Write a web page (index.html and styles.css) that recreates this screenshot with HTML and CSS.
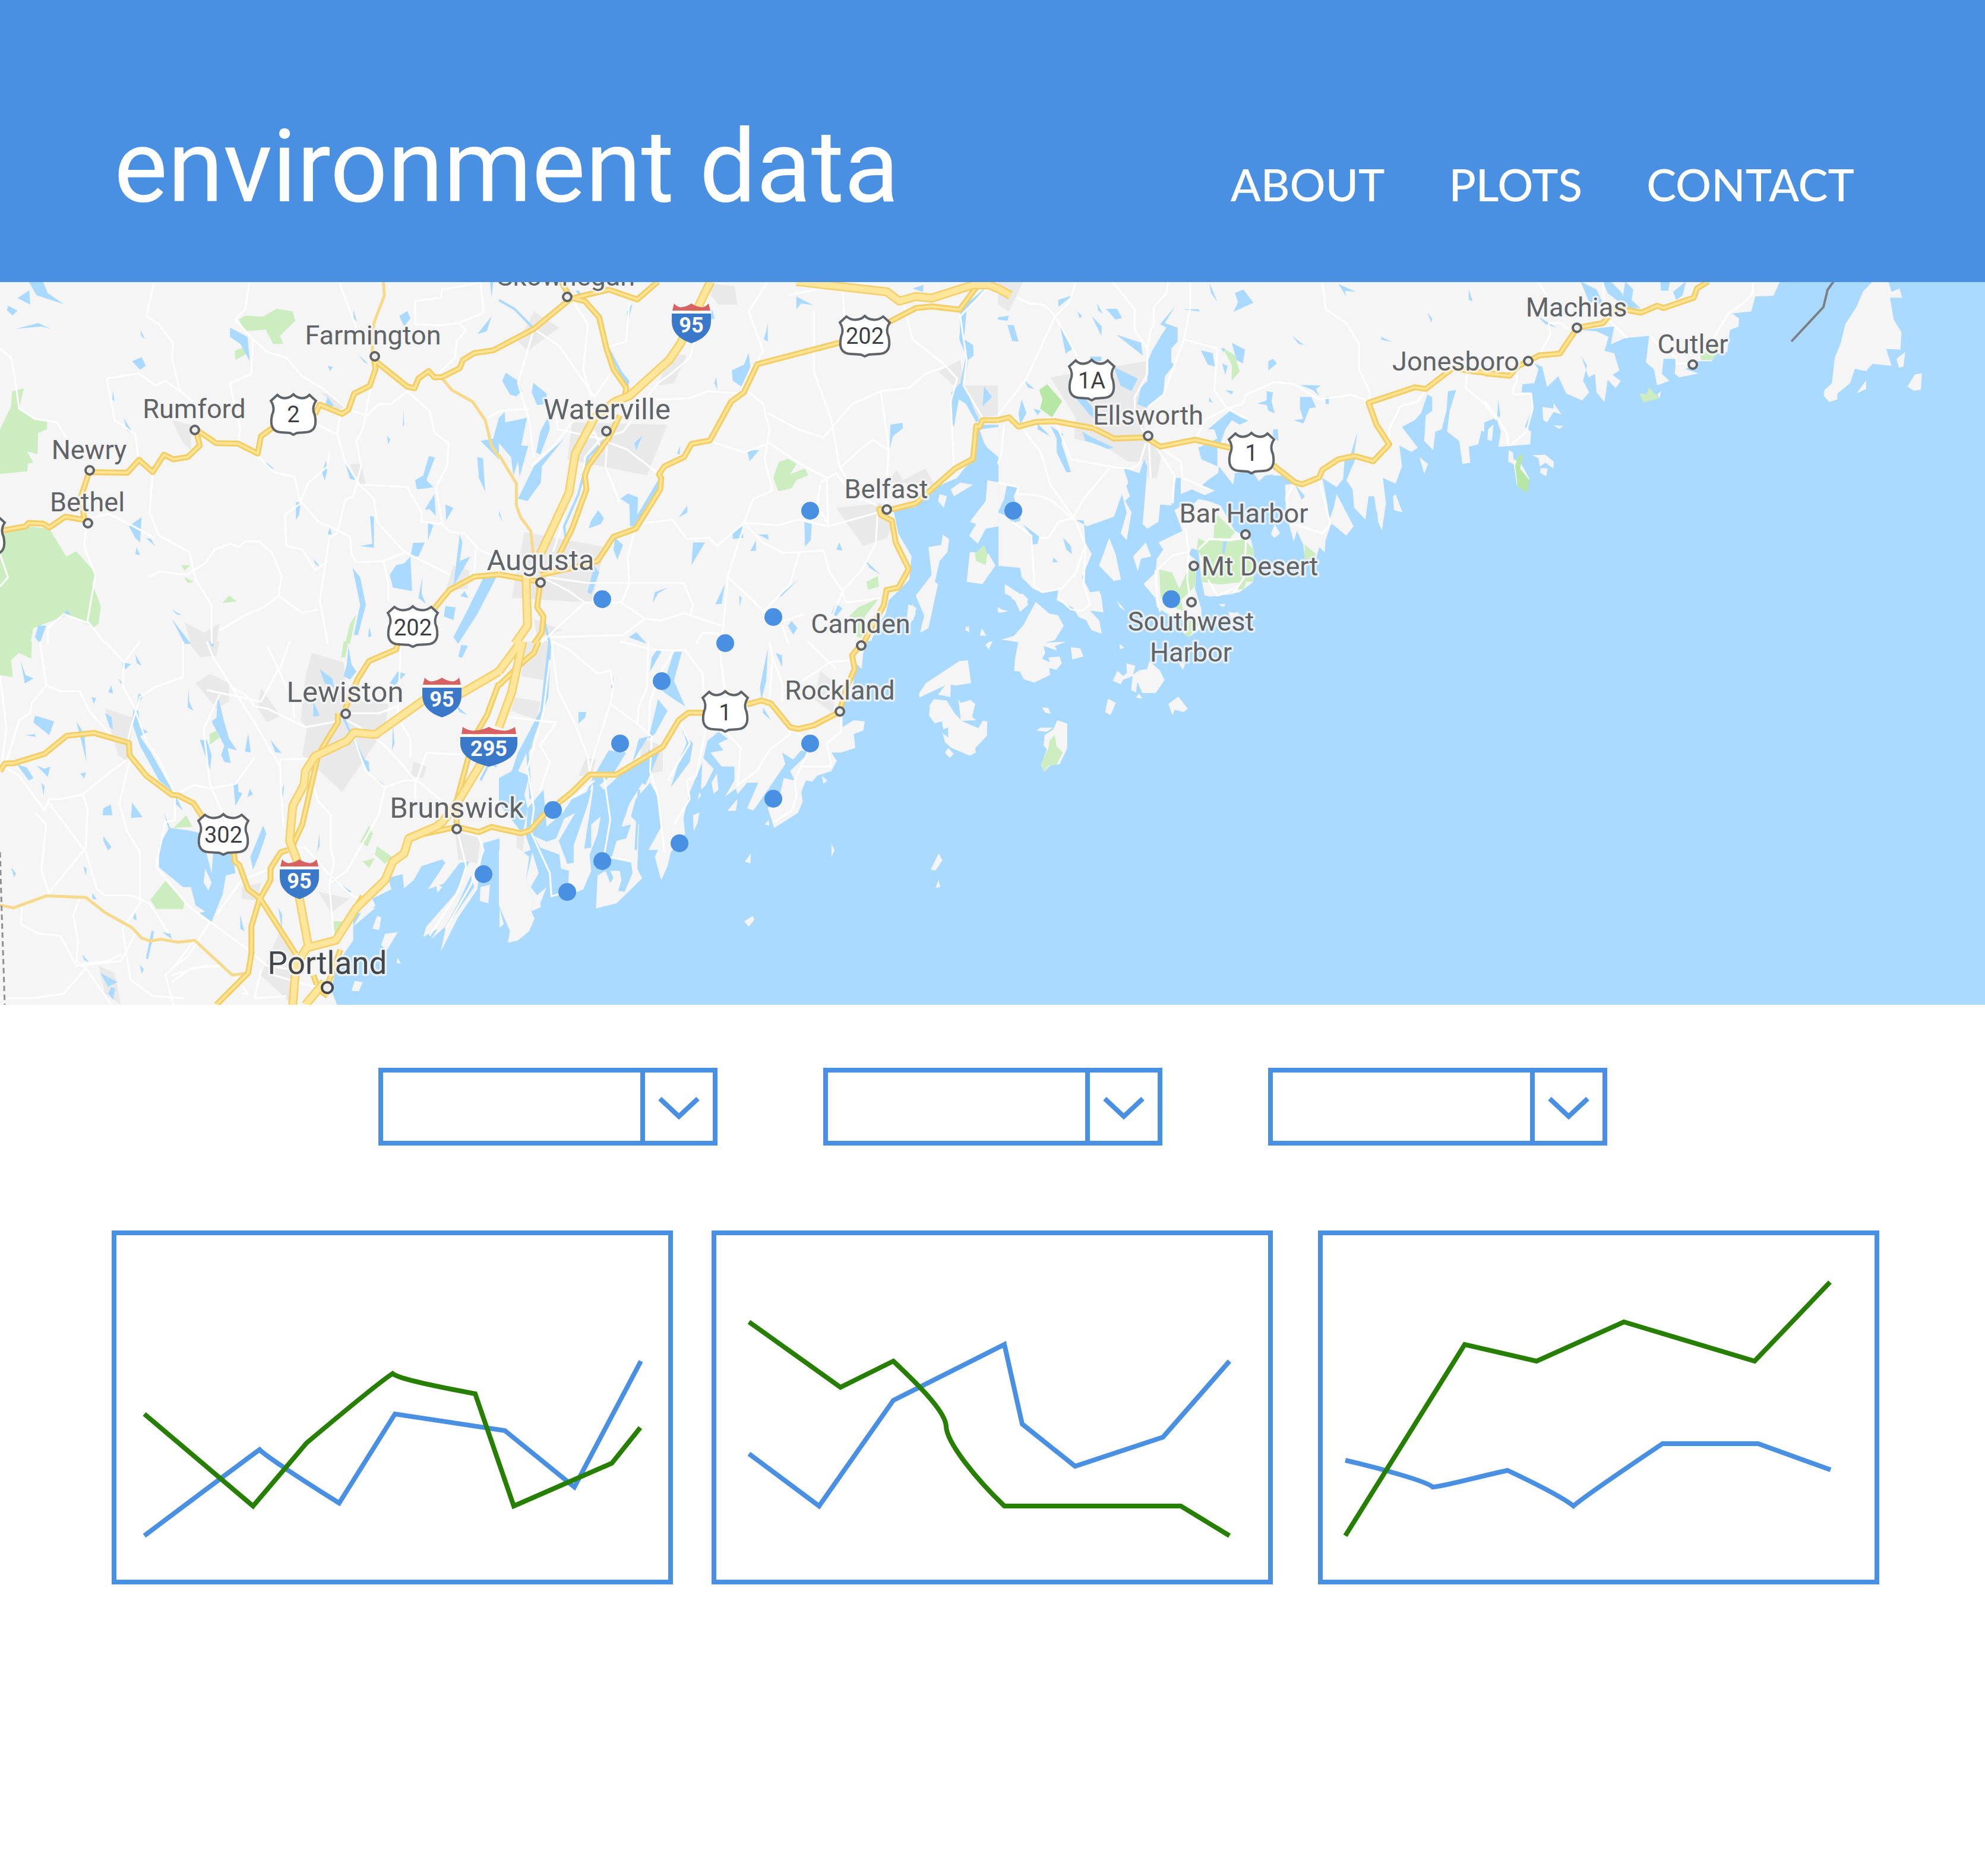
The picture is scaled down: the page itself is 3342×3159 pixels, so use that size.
FILE: index.html
```html
<!DOCTYPE html>
<html lang="en">
<head>
<meta charset="utf-8">
<meta name="viewport" content="width=device-width, initial-scale=1">
<title>environment data</title>
<link rel="stylesheet" href="styles.css">
</head>
<body>
<header class="site-header">
  <h1 class="site-title">environment data</h1>
  <nav class="site-nav" aria-label="Main">
    <a href="#about">ABOUT</a>
    <a href="#plots">PLOTS</a>
    <a href="#contact">CONTACT</a>
  </nav>
</header>

<main>
<svg class="map" viewBox="0 475 3342 1217" role="img" aria-label="Map of the Maine coast with monitoring stations">
  <defs>
    <g id="us-shield">
      <path d="M-27-32Q-20-25-11-27-5-28 0-33 5-28 11-27 20-25 27-32L38-22Q30-10 36 2 42 30 20 31L6 32 0 35-6 32-20 31Q-42 30-36 2-30-10-38-22Z"/>
    </g>
    <g id="us-shield-wide">
      <path d="M-31-32Q-22-25-12-27-5-28 0-33 5-28 12-27 22-25 31-32L42-22Q34-10 40 2 46 30 24 31L7 32 0 35-7 32-24 31Q-46 30-40 2-34-10-42-22Z"/>
    </g>
    <g id="minor">
      <g transform="translate(0 474) scale(.5357 .389)">
        <path d="M485 0 460 150 500 185 545 270 540 330 565 470 605 520M785 0 770 120 740 165 795 250 790 400 722 440 755 640 748 700M795 250 840 305 900 330 950 410 1010 460 1095 555 1155 580 1190 530 1230 530 1280 475M0 290 35 330 45 400 60 550 110 595 180 610 250 780M335 420 435 398 490 450 520 430 600 510M335 420 360 600 425 660 435 770M480 830 470 1000 500 1100 595 1170 615 1290 665 1400 665 1568M270 1060 265 1150 300 1270 275 1470 330 1568M270 1030 340 1005 420 1060 485 1110M470 1280 500 1255 585 1270 645 1220 675 1160 725 1135 750 1150 770 1125 815 1125 855 1175 885 1275 875 1360 830 1410 770 1445 690 1510M750 710 820 770 860 825 925 845 945 960 895 1010 900 1145 950 1160 990 1250 1030 1210M1070 570 1060 660 1085 780 1130 880 1175 940 1185 1040 1270 1170 1415 1270M1000 620 1055 660M1165 460 1140 640 1120 690 1135 800 1110 930 1085 945 1060 1090 1035 1110 1005 1380 1030 1568M1035 740 1030 800 970 870 945 950 1000 1040 1035 1060 1100 1105 1105 1180 1120 1215 1205 1210 1270 1175M1280 475 1350 560 1365 655 1410 700 1405 800 1370 890 1390 1050 1415 1085 1460 1090 1505 1160 1568 1200M1140 880 1280 890 1325 1000 1325 1040 1390 1050M1205 1210 1220 1300 1220 1380M1065 0 1120 200M1510 0 1520 135 1440 180 1380 190 1305 185 1305 85 1385 70 1390 35 1510 5M1440 180 1465 210 1435 260 1430 330 1370 410M1525 595 1568 565M0 1180 25 1280 0 1320M150 1568 150 1500 200 1440 280 1480M875 1360 950 1435 1000 1420M1495 1160 1490 1280"/>
      </g>
      <g transform="translate(840 474) scale(.5357 .389)">
        <path d="M230 80 280 185 265 380 290 500M110 205 60 440 95 600 110 760M110 205 190 280 300 500 350 400M340 285 400 260 410 90M430 505 530 510 600 505 655 475 760 485M670 0 600 330 540 400 500 440 430 560M845 0 785 130 830 300 810 350M1080 0 1085 150M910 60 1010 30M990 130 990 390 1045 600 1070 800 1140 950M770 460 830 530 850 640 835 770 860 905 800 940 770 1045 880 1055 940 1030 1035 1060 1190 1000M845 570 940 640 1020 675 1110 530 1200 475 1290 460 1340 400 1400 370M1200 475 1225 720 1215 970M660 690 770 740 850 700 960 800 1030 850 1035 1060M1070 810 1125 740 1175 685 1225 730M1270 90 1300 250 1400 360 1440 420 1420 520 1430 800M1535 30 1450 150 1470 340 1460 450 1520 590M1190 1000 1185 1130 1140 1250 1080 1340 1090 1390 1200 1370M440 1050 545 1030 590 1115 660 1110 685 1145 770 1045 830 1130 895 1175 1020 1165 1040 1260 1080 1340 1050 1440M770 1060 720 1270 700 1568M720 1280 790 1370 870 1480 960 1440M945 1170 915 1310 830 1430M150 1280 280 1305 580 1305 610 1400 600 1450M150 1290 220 1340 270 1390 385 1390 460 1460 510 1468 580 1435 700 1490M385 1390 410 1310 405 1190 430 1060M460 1460 390 1530 160 1540M270 1390 190 1490 130 1568M240 590 180 700 100 800M340 690 335 800 380 960M330 690 400 725 500 830M180 580 185 640 320 680 390 650 430 580M320 680 270 760 265 850M95 550 0 560M620 1568 640 1520 700 1525M890 1490 910 1568M1010 880 1000 970 1040 1060M1010 870 1060 830 1110 920 1190 970M320 720 300 650 230 750 200 1050 170 1170"/>
      </g>
      <g transform="translate(1680 474) scale(.5357 .389)">
        <path d="M60 70 100 95 145 100 180 150 240 300 270 380M245 0 225 90 180 150 90 420 0 580M360 0 430 120 430 210 470 290 470 400 430 500 430 560 460 660M535 0 530 50 490 110 490 190 480 210 470 290M605 0 605 110 585 250 520 490 470 545M585 250 690 290 680 470 720 550 790 600M1020 0 1030 120 1095 180 1135 270 1135 380 1170 480 1165 520M720 550 770 530 780 490 870 435 930 445 1010 510 1110 490 1170 520M180 605 230 770 370 805 420 810 445 790 465 700M80 640 135 740 165 880 240 1025 275 1140 245 1260 200 1330 140 1345 115 1320 110 1200 105 1100 45 1040M350 810 270 940 235 1025 190 1040 160 1110 130 1110M20 620 10 750 0 790M0 870 65 890 60 920 125 925 170 950 235 1025M475 700 480 850M480 690 575 780 580 850 665 900M490 700 555 840 550 960M1345 470 1320 520 1265 540 1230 640 1230 690M1475 390 1470 460 1530 530 1568 600M930 880 905 940 930 1050 1020 1090 1045 1050 1010 860M780 1110 725 1120 665 1115 630 1160M780 1100 775 1280 740 1350M600 1170 595 1290 605 1380M495 1250 500 1360 510 1430M620 690 650 600 720 550M590 1070 600 1170 550 1185 500 1250M660 1290 690 1360 740 1330M275 1140 270 1310 290 1400 265 1425 230 1420 190 1370"/>
      </g>
      <g transform="translate(2500 474) scale(.537 .389)">
        <path d="M165 0 200 70M370 0 375 110M840 0 840 50 810 95 765 135 710 260M200 180 205 230 170 320M200 180 240 180 255 200 290 205M390 170 445 245M100 390 100 430 88 465 90 490 145 485 150 550 130 650 80 710M0 520 40 590 70 660 72 710M520 235 545 280 600 330 600 355 650 355"/>
      </g>
      <g transform="translate(0 1080) scale(.5357 .3903)">
        <path d="M0 150 20 370 5 540M125 0 145 190 100 265 95 310 60 340 20 520M145 190 190 215 250 215 280 300 345 400M15 540 60 580 140 730 155 680 190 680 260 660 340 570 400 510M260 660 275 720 270 890 150 1090M330 0 390 90 385 190 420 280 460 430 500 510 550 660M390 90 440 0M575 0 575 155 490 195 440 240 410 380 400 440M650 0 670 70 730 200 800 350 880 540 890 800M730 200 770 230 800 280 840 290 960 370 1060 345M875 120 920 260 925 330M875 120 820 260 650 210M880 120 910 0M875 120 840 20M690 230 640 380 660 620 700 740M550 660 610 620 660 635 740 615 800 500M550 660 550 770 520 780 490 970 590 1140 660 1210 770 1320M410 500 375 700 400 820 440 910 440 1130M110 740 145 790 130 990 155 1090M150 690 270 910 305 1070 330 1095 410 1095 470 1130 530 1260M70 1130 65 1220 120 1260 190 1270 240 1400 380 1380 430 1250M250 1110 230 1180 245 1290 240 1380 270 1410 350 1568M270 1410 200 1520 100 1540 0 1540M260 1390 340 1380 380 1350M440 1130 385 1240 410 1460 480 1530 580 1540M610 1290 550 1400 520 1440 545 1568M700 1400 600 1410 540 1470M660 1210 590 1360 550 1400M680 1180 760 1030 850 980M770 1320 840 1400 940 1420M980 600 1000 690 1040 750 1040 900 1050 950 1035 1050 1050 1290M900 890 960 890 1000 950 1030 1000 1100 1090 1140 1120M1090 340 1130 370 1210 450 1270 540 1305 600 1320 610 1415 720M1110 410 1150 560 1210 630 1190 750 1090 990 1040 1040M1210 630 1270 600 1310 600 1340 480 1460 490M1090 310 1190 310 1250 280M1260 0 1250 330 1290 420 1290 500M1305 600 1305 680M880 540 880 510 990 505M1440 830 1465 970 1440 1080 1350 1270M1500 830 1520 900 1480 1050 1400 1240M540 1440 640 1400 700 1400M740 1450 780 1520 760 1520M860 1440 960 1480 990 1490M820 1420 800 1540 900 1530"/>
      </g>
      <g transform="translate(840 1080) scale(.5357 .3903)">
        <path d="M165 0 185 210 240 360 280 500 285 570M165 0 220 35 310 140 350 125 360 200 350 270 430 350 480 410 475 560 500 670 520 910M160 80 140 300 90 550 110 720 100 820 160 1000 165 1100 215 1080M0 320 110 340 180 350 130 450 160 520 130 640M350 270 300 480 285 560M470 0 465 200 440 280 435 350M470 410 475 260 510 130 550 40M380 0 480 35 550 40 585 35 640 140 650 380 620 580 590 600 600 680 550 790M690 0 710 210M850 0 860 70 890 180 890 260M700 370 760 460 750 620 810 560 850 470 915 400 910 370M970 0 1060 120M1110 80 1040 90 890 230M860 70 850 250M1075 320 1075 390 1030 440 1045 540 950 540M990 360 970 440M930 380 980 450 950 540 930 600 935 670 920 730 865 780M330 580 350 770 330 930M345 930 415 950M570 350 600 440 530 600M230 650 240 670 300 600"/>
      </g>
    </g>
    <g id="routes">
      <g transform="translate(0 474) scale(.5357 .389)">
        <path d="M0 1080 80 1060 90 1045 135 1048 155 1065 205 1018 265 1032 255 930 280 825 400 828 437 772 480 825 515 750 545 770 590 760 628 710 615 640 680 700 748 702 810 745 820 670 860 630M990 575 1005 533 1075 573 1095 555 1113 485 1162 452 1180 380 1176 340 1280 455 1303 462 1315 420 1347 388 1365 415 1390 413 1445 375 1455 340 1490 310 1550 298 1568 285M1365 1415 1413 1335 1490 1278 1568 1268"/>
      </g>
      <g transform="translate(840 474) scale(.5357 .389)">
        <path d="M0 285 110 205 225 75 345 35 435 78 500 0M195 0 225 70 270 85 315 155 338 290 360 380 400 460 395 510M338 690 280 800 270 840 275 900 230 1070 190 1180M1500 25 1448 122 1360 108 1310 115 1220 180M1070 265 812 358 770 480 730 520 663 688 605 703 582 760 520 800 503 835 510 850 507 900 430 1070 360 1105 310 1210 230 1240 130 1270M340 690 380 580M0 1268 130 1300 120 1410 140 1450 135 1520 110 1568M1568 600 1520 600 1510 630 1500 625 1490 768 1435 808 1310 960 1240 985 1195 985 1200 1010 1235 1035 1247 1130 1288 1245 1255 1325 1218 1335 1210 1400 1170 1500 1145 1568"/>
      </g>
      <g transform="translate(1680 474) scale(.5357 .389)">
        <path d="M0 600 35 588 65 628 120 608 180 605 300 635 365 680 465 675 510 715 620 685 730 720M865 795 935 870 957 878 1010 848 1020 815 1070 770 1120 755 1180 778 1230 705 1190 620 1165 525 1310 458 1345 465 1430 375 1500 390 1568 400"/>
      </g>
      <g transform="translate(2500 474) scale(.537 .389)">
        <path d="M0 398 78 408 100 370 170 320 235 312 290 200 370 180 410 115 490 135 540 105 560 115 655 70 665 30 700 0"/>
      </g>
      <g transform="translate(0 1080) scale(.5357 .3903)">
        <path d="M0 560 15 527 45 525 140 485 210 407 295 395 405 438 407 490 460 580 540 662 560 665 608 698 635 755M735 910 738 950 752 965 780 1070 818 1110 860 1200 930 1350M905 900 882 910 850 980 850 1030 815 1115 790 1230 790 1350 780 1430 680 1568M1250 10 1245 35 1160 85 1125 160 1085 290M1062 310 1062 350 1030 420 1000 490 950 790 920 880M1568 180 1530 320 1500 390 1470 510 1435 690 1435 800M1300 840 1435 800 1505 823 1545 800 1568 808M1070 1330 1030 1480 1000 1500 1030 1530M1140 1100 1080 1230M985 1440 995 1480"/>
      </g>
      <g transform="translate(840 1080) scale(.5357 .3903)">
        <path d="M125 0 110 50 75 90 0 190M0 808 70 828 98 815 140 750 230 650 285 575 368 575 515 455 565 340 595 308 645 308M780 272 825 255 855 268 915 370 940 378 990 362 1070 305 1095 190 1118 120 1110 60 1140 10"/>
      </g>
    </g>
    <g id="highways">
      <g transform="translate(840 474) scale(.5357 .389)">
        <path d="M665 0 570 270 535 340 410 495 365 520 300 590 240 745 220 915 130 1180M85 1270 90 1490 50 1568M935 0 1220 45 1258 85 1310 65 1360 72 1490 15 1540 15 1568 30"/>
      </g>
      <g transform="translate(1680 474) scale(.5357 .389)">
        <path d="M0 30 40 60"/>
      </g>
      <g transform="translate(0 1080) scale(.5357 .3903)">
        <path d="M1568 130 1450 225 1330 255 1180 402 1113 393 1090 430 990 495 960 560 955 620 920 710 910 860 940 970M1568 400 1440 690 1390 780 1370 800 1285 850 1270 915 1235 950 1210 1030 1120 1150 1055 1290 970 1320 940 1100M965 1320 930 1400 920 1568M1020 1470 960 1568"/>
      </g>
      <g transform="translate(840 1080) scale(.5357 .3903)">
        <path d="M75 0 40 220 0 370M70 0 0 130"/>
      </g>
    </g>
  </defs>

  <rect class="land" y="475" width="3342" height="1217"/>

  <!-- built-up areas -->
  <g class="urban">
    <g transform="translate(0 474) scale(.5357 .389)"><path d="M540 600 600 620 600 730 575 700ZM1010 480 1040 490 1090 540 1060 560ZM1100 790 1135 790 1150 880 1120 870ZM580 1475 640 1520 690 1480 680 1568 600 1568ZM1425 1230 1475 1250 1470 1330 1400 1340Z"/></g>
    <g transform="translate(840 474) scale(.5357 .389)"><path d="M670 10 740 20 750 100 690 100 665 60ZM230 610 530 620 465 840 215 770ZM540 310 590 320 550 440 500 450ZM80 1085 335 1150 290 1390 40 1370ZM1060 980 1200 960 1240 1040 1220 1110 1145 1145ZM1380 390 1450 340 1460 450 1568 450 1568 580 1500 590 1430 450ZM60 260 110 130 190 200 90 300ZM1220 870 1250 815 1270 860 1340 810 1370 880ZM110 1460 200 1510 120 1540Z"/></g>
    <g transform="translate(1680 474) scale(.5357 .389)"><path d="M165 415 465 345 460 660 515 740 500 850 470 850 470 780 410 780 330 710 240 680 245 590ZM0 0 80 0 35 130 0 100Z"/></g>
    <g transform="translate(0 1080) scale(.5357 .3903)"><path d="M980 50 1080 90 1090 250 1220 270 1210 380 1075 650 990 540 950 490 965 370 945 340 960 150ZM615 180 660 140 720 180 720 260 680 290ZM590 0 690 0 680 60 630 70ZM330 290 420 330 400 520 370 490ZM820 200 880 320 840 350 810 290ZM1000 1080 1100 1110 1040 1170ZM880 1250 920 1300 920 1568 820 1440ZM1430 820 1510 850 1500 960 1440 940ZM310 1400 360 1430 380 1568 330 1520ZM1300 520 1340 540 1330 590 1290 580ZM760 1060 820 1040 810 1120 760 1110Z"/></g>
    <g transform="translate(840 1080) scale(.5357 .3903)"><path d="M90 0 165 0 150 170 70 150ZM45 240 130 260 120 340 40 300ZM275 500 305 510 290 590 250 580ZM450 420 515 450 515 560 440 580ZM1010 130 1060 180 1050 310 990 250ZM55 830 80 840 75 910 55 890Z"/></g>
  </g>

  <!-- parks and forest -->
  <g class="park">
    <g transform="translate(0 474) scale(.5357 .389)"><path d="M750 165 770 148 825 152 870 118 920 130 928 170 880 235 890 270 858 270 835 208 770 215ZM738 300 765 285 773 315 740 340ZM38 475 75 463 60 550 105 595 148 605 148 640 120 655 118 748 85 735 105 785 88 788 85 822 0 833 0 640 35 540ZM0 1090 90 1060 155 1070 208 1190 240 1168 302 1265 290 1310 317 1405 310 1480 295 1497 210 1445 105 1500 95 1568 0 1568ZM570 1228 598 1228 580 1252ZM578 1278 608 1300 590 1305ZM720 1360 745 1385 698 1392ZM1120 1440 1100 1568 1085 1568 1100 1480Z"/></g>
    <g transform="translate(840 474) scale(.5357 .389)"><path d="M880 780 910 768 935 790 915 835 962 810 972 838 935 860 920 895 878 908 862 850ZM1155 1300 1190 1275 1195 1320 1160 1335ZM1195 1370 1150 1450 1140 1540 1125 1540 1130 1460 1100 1450 1130 1410Z"/></g>
    <g transform="translate(1680 474) scale(.5357 .389)"><path class="deep" d="M155 445 202 518 170 588 133 550 140 510 130 470Z"/><path d="M705 285 745 320 760 390 735 430 735 360Z"/></g>
    <g transform="translate(2500 474) scale(.537 .389)"><path d="M675 320 740 260 725 330 710 340 678 340Z"/></g>
    <g transform="translate(0 1080) scale(.5357 .3903)"><path d="M0 0 100 0 98 75 60 50 35 80 40 155 0 145ZM585 750 605 800 545 805ZM520 1033 580 1125 575 1155 492 1155 472 1115ZM658 400 680 385 690 415 660 445ZM1160 795 1172 830 1155 885 1132 865ZM1185 883 1232 930 1210 960 1178 920ZM1140 950 1178 935 1160 978ZM1045 1208 1082 1208 1050 1290ZM1080 0 1095 0 1085 70 1072 70Z"/></g>
    <g transform="translate(840 1080) scale(.5357 .3903)"><path d="M115 350 105 460 82 485Z"/></g>
  </g>

  <!-- lakes, rivers and the sea -->
  <g class="water">
    <rect x="1679" y="1080" width="1663" height="612"/>
    <g transform="translate(0 474) scale(.5357 .389)"><path d="M90 0 135 0 150 50 200 98 115 60ZM55 72 92 38 95 100ZM25 105 55 125 40 147 22 125ZM50 205 120 180 160 205 130 195ZM723 200 778 240 785 345 755 270 723 240ZM443 210 455 250 443 235ZM415 345 445 328 458 365 440 382ZM1110 120 1122 175 1112 160ZM1255 150 1280 128 1290 160 1270 195ZM1500 228 1545 150 1530 215ZM1125 315 1158 358 1145 350ZM1030 365 1047 370 1037 388ZM355 470 360 520 353 510ZM388 590 418 655 400 645ZM1030 500 1050 540 1020 540ZM1268 550 1270 620 1266 630ZM1217 668 1227 685 1220 705ZM835 780 862 812 845 805ZM1025 775 1028 820 1020 862 1012 825ZM1085 785 1118 860 1100 855ZM1348 755 1367 762 1340 860 1362 890 1340 895 1310 900 1305 860 1330 840ZM1365 920 1370 1015 1350 985 1335 988ZM1400 965 1425 980 1402 1035ZM1500 760 1518 765 1525 910 1505 850ZM1568 590 1568 770 1510 690 1550 680ZM930 955 945 955 940 1010 930 1033ZM1163 1015 1175 1018 1175 1152 1130 1145 1170 1135ZM405 1060 445 1020 440 1130 425 1110ZM458 1110 475 1115 487 1145ZM430 1150 440 1185 425 1180ZM1037 1065 1043 1095 1030 1095ZM1345 1045 1362 1055 1345 1120ZM1298 1132 1335 1130 1315 1190 1290 1190ZM1290 1190 1295 1340 1235 1325 1225 1270 1245 1228 1270 1220ZM985 1200 1007 1237 992 1225ZM1108 1240 1132 1280 1150 1400 1125 1530 1112 1530 1132 1400ZM1445 1095 1453 1130 1445 1210 1478 1190 1425 1320 1440 1150ZM1520 1280 1560 1280 1500 1440 1440 1568 1425 1540 1470 1420ZM1328 1275 1325 1350 1338 1395 1315 1370ZM1460 1340 1472 1370 1447 1362ZM1400 1405 1432 1410 1425 1465 1395 1450ZM540 1420 572 1445 555 1440ZM540 1460 600 1568 580 1568ZM120 1490 145 1490 125 1568 110 1540ZM210 1420 222 1440 203 1440ZM1160 1495 1168 1535 1157 1540ZM1540 0 1550 0 1545 70Z"/></g>
    <g transform="translate(840 474) scale(.5357 .389)"><path d="M22 395 60 430 72 475 55 497 35 490 10 430ZM108 438 150 485 150 530 120 535 103 480ZM0 590 18 565 20 610 88 590 70 710 92 712 65 845 60 780 45 840 38 760 0 700ZM155 585 160 640 130 750 117 740 130 650ZM205 680 135 800 132 870 90 950 60 940 110 800ZM360 345 410 430 405 470ZM402 130 420 95 405 180ZM670 120 678 160 665 165ZM785 310 790 370 762 455 735 430 732 385 770 360ZM683 412 687 470 677 440ZM845 178 845 260 832 250 840 215ZM1230 620 1268 612 1270 635 1238 670 1228 725ZM450 668 432 730 425 700ZM570 710 568 750 560 745ZM780 730 818 730 788 778ZM382 940 405 918 437 935 435 1010 500 860 505 910 430 1060 412 1060 410 965ZM312 990 330 1025 320 1050 282 1068 290 1035ZM592 970 592 1000 565 1022ZM960 1040 983 1050 980 1120 962 1148ZM735 1085 765 1060 768 1110 735 1115ZM610 1130 648 1130 630 1170 605 1228ZM815 1095 845 1095 848 1118ZM808 1120 808 1165 790 1168ZM1070 1130 1080 1165 1060 1160ZM365 1110 390 1140 372 1205 360 1160ZM300 1230 315 1260 290 1355 278 1345ZM530 1325 500 1350 483 1392 490 1345ZM710 1310 700 1395 680 1398ZM755 1360 763 1370 757 1408ZM945 1285 890 1360 875 1368ZM1150 1205 1200 1270 1165 1240ZM1060 1395 1080 1415 1060 1450 1045 1435ZM920 1470 938 1500 925 1528 908 1490ZM408 1540 432 1518 465 1568ZM935 65 987 102 950 95 935 120ZM1300 30 1335 15 1332 45ZM1525 455 1550 500 1520 540ZM0 990 12 1040 0 1010Z"/>
    <path d="M1535 20 1470 120 1462 250 1490 275 1492 320 1475 340 1462 440 1495 560 1510 600 1500 610 1468 530 1445 510 1430 630 1420 600 1422 480 1450 440 1468 320 1448 255 1450 120ZM1500 620 1570 620 1570 1570 1165 1570 1195 1480 1215 1440 1225 1380 1255 1340 1290 1290 1297 1190 1255 1090 1240 990 1310 975 1350 905 1440 850 1465 805 1495 770Z"/></g>
    <g transform="translate(1680 474) scale(.5357 .389)"><path d="M745 50 772 35 803 92 740 132 755 90ZM665 5 690 88 670 50ZM340 118 375 118 390 158 370 165ZM195 190 237 290 213 312ZM295 150 327 195 325 235ZM372 230 450 265 455 320ZM557 108 525 180 565 200 565 260 545 290 545 350 555 360 525 410 520 490 480 530 470 548 438 530 450 460 470 430 470 350 485 300 515 230 530 200 510 185ZM30 188 50 188 65 260 45 258ZM0 155 35 148 30 170 0 165ZM190 80 235 60 190 110ZM250 130 265 150 257 160ZM312 95 330 140 315 125ZM555 120 630 120 635 130 580 120ZM638 298 675 310 682 368 660 360ZM735 265 777 295 770 355 750 340ZM850 345 865 335 877 355 850 385ZM925 235 962 275 945 270ZM1205 240 1240 262 1205 252ZM1350 135 1365 160 1362 178ZM1070 10 1125 45 1090 40 1095 65ZM1480 35 1492 85 1480 80ZM365 370 440 420 420 475 385 450ZM290 325 325 325 325 345 290 345ZM230 480 260 480 300 550 330 620 290 580ZM75 510 90 570 70 620 65 570ZM85 430 115 465 95 460ZM112 550 135 560 125 580ZM845 475 865 480 860 520 870 570 850 560 845 535 815 528 845 515ZM950 500 985 500 1000 545 980 548 960 615 930 600 960 595 950 550ZM950 448 1015 450 1000 465 1010 495 990 470ZM1030 500 1040 500 1040 530 1030 530ZM715 470 740 475 735 490ZM700 290 715 290 710 305ZM705 355 722 365 715 405ZM665 500 675 525 663 520ZM730 560 765 590 790 600 760 620 735 600 715 640 700 700 720 700 690 720 690 800 640 770 630 720 690 680 680 640 660 640 695 600ZM865 640 880 640 882 690 865 670ZM165 625 205 660 200 700 230 825 215 825 185 740 185 680ZM265 650 290 670 365 720 345 725 300 700 275 690ZM125 615 165 670 125 640ZM28 885 62 890 50 930 72 1035 50 1045 20 1010 0 1000 20 940ZM78 1050 130 1105 125 1135 105 1140 100 1090ZM205 1110 230 1145 232 1180 215 1160ZM175 1195 190 1215 172 1215ZM1130 650 1120 745 1110 745Z"/>
    <path d="M-2 1230 70 1240 75 1280 110 1330 140 1348 190 1335 185 1380 265 1430 290 1500 325 1522 290 1430 300 1400 330 1430 320 1340 290 1345 265 1280 295 1180 275 1130 270 1035 245 1032 280 1060 365 1018 390 920 410 870 395 808 445 830 460 770 470 800 455 1050 470 1070 505 1040 510 965 545 970 560 850 575 850 575 920 610 900 650 925 683 905 640 885 660 860 692 830 695 800 740 880 745 830 800 820 820 865 840 840 890 830 930 875 903 880 905 1000 930 1125 940 1080 960 1140 965 1200 1000 1200 1010 1150 1027 1172 1030 1120 1045 1060 1035 960 1020 850 1065 890 1085 855 1090 770 1115 740 1130 750 1095 860 1115 900 1120 980 1155 1030 1165 930 1188 930 1195 1040 1207 1078 1220 960 1210 850 1250 875 1270 800 1262 710 1300 738 1320 720 1270 630 1310 600 1330 570 1350 490 1365 500 1365 560 1345 580 1340 690 1368 730 1375 650 1395 640 1410 560 1415 475 1440 470 1420 560 1412 650 1450 690 1460 790 1485 785 1480 715 1510 705 1520 645 1540 660 1550 600 1570 590 1570 1570-2 1570Z"/></g>
    <g transform="translate(2500 474) scale(.537 .389)"><path d="M300 0 350 35 375 110 400 140 340 80 330 100ZM395 0 430 50 435 80 480 120 440 110 385 50 370 0ZM440 0 465 35 460 80 490 120 430 90ZM550 0 580 0 575 40 552 40ZM590 45 630 0 620 60 600 80ZM165 150 225 200 190 185ZM42 510 48 580 38 600Z"/>
    <path d="M-2 610 35 590 50 650 42 716 142 705 145 650 125 630 152 540 145 480 115 480 118 445 155 440 168 380 155 355 180 370 195 457 230 410 255 485 305 515 327 480 308 430 320 365 302 320 325 415 345 400 350 480 375 522 385 425 410 462 426 430 400 405 422 385 405 310 375 300 388 240 350 215 300 210 405 195 395 272 440 245 515 235 505 350 530 380 540 450 578 430 555 400 560 335 600 335 595 400 610 415 670 398 630 380 660 345 710 345 730 310 760 305 768 210 795 195 797 160 775 138 835 130 848 65 905 62 925 0 1570 0 1570 1570-2 1570Z"/></g>
    <g transform="translate(0 1080) scale(.5357 .3903)"><path d="M65 85 80 145 105 160 78 182ZM110 320 170 345 155 405 105 350ZM80 405 110 400 112 412ZM425 55 445 105 430 95ZM385 90 412 98 395 120 385 110ZM370 160 388 180 385 190ZM350 190 355 225 340 220ZM435 225 450 235 430 280ZM288 240 302 245 295 270ZM330 310 350 325 355 380 385 410 345 370ZM240 345 265 400 272 520ZM420 285 435 300 440 370 465 390 440 410 475 480 495 530 545 650 500 600 440 450 415 350ZM53 530 85 545 105 590 90 600ZM115 535 140 550 158 540 150 585ZM130 610 140 625 137 665ZM252 570 270 565 265 592ZM592 205 595 260 608 300 590 285ZM685 235 705 350 720 420 745 470 715 460 725 525 705 520 695 490 705 450 665 345 680 330ZM628 425 650 425 665 490 660 555ZM780 395 788 480 770 475ZM850 425 885 482 865 478ZM733 610 748 615 750 650 762 655 740 710ZM785 635 795 660 778 672ZM893 610 890 670 882 660ZM348 703 353 750 322 750 325 720ZM415 695 448 758 412 762ZM325 840 335 860 350 885 340 903 325 860ZM827 795 837 830 815 920 795 985 787 930ZM35 975 50 1000 45 1020ZM262 970 272 980 270 1012ZM1003 830 1005 880 997 910ZM875 1150 887 1180 885 1240ZM755 1180 768 1250 755 1240ZM510 1255 535 1260 540 1285ZM425 1170 430 1205 418 1195ZM483 1250 480 1290 462 1370ZM315 1430 370 1470 340 1490ZM350 1490 362 1500 355 1545 340 1520ZM258 1350 280 1385 265 1375ZM440 1395 452 1415 445 1435ZM290 1085 305 1115 290 1110ZM1005 120 1045 160 1050 200 1020 180ZM1095 20 1105 100 1120 130 1100 165 1080 150 1090 100ZM985 260 1005 320 985 325ZM1250 130 1275 140 1240 190 1225 180ZM1135 500 1160 520 1160 550ZM1170 580 1210 620 1190 610ZM1235 360 1240 440 1232 470ZM1030 1010 1105 1080 1095 1085ZM1430 270 1468 318 1445 305ZM1450 15 1470 20 1452 72 1440 65ZM515 740 535 805 590 815 640 830 650 920 665 1000 670 910 730 905 740 1000 710 1010 700 1090 665 1210 620 1175 645 1165 615 1140 600 1060 575 1060 500 975 500 880 530 810ZM550 660 575 730 550 700Z"/>
    <path d="M1060 1570 1040 1500 1060 1390 1110 1290 1110 1180 1160 1160 1180 1140 1170 1110 1230 1070 1220 1020 1265 1005 1270 1065 1300 1030 1325 970 1390 940 1400 955 1345 1070 1395 1045 1445 955 1475 950 1430 1090 1340 1230 1330 1275 1375 1240 1355 1285 1400 1230 1440 1130 1480 1010 1490 1060 1400 1240 1385 1340 1440 1190 1500 1070 1520 870 1570 850 1570 1570Z"/></g>
    <g transform="translate(840 1080) scale(.5357 .3903)"><path d="M500 30 510 45 475 130 480 70ZM550 45 575 45 550 170 585 280 550 250 510 210 530 130ZM500 250 530 300 490 400 470 420ZM570 340 580 400 610 440 600 520 540 630 570 500 590 440ZM250 305 275 305 270 330 250 355ZM345 470 400 480 360 570 300 640 290 600ZM440 420 470 410 420 520ZM845 30 840 170 825 250 820 200ZM870 50 890 60 890 110ZM830 285 855 340 830 310ZM360 150 360 200 352 200ZM470 470 510 460 480 560 460 620 440 600Z"/>
    <path d="M155 0 165 0 155 240 120 380 60 560 95 580 80 660 90 720 75 830 0 700 0 590 40 560 60 480 130 300ZM1160-2 1570-2 1570 1570-2 1570-2 1240 15 1220 0 1140 0 1040 20 990 60 920 100 900 85 840 90 720 140 640 150 800 200 740 230 680 290 640 280 700 235 880 235 955 215 960 188 860 240 740 205 765 180 850 150 865 110 840 130 890 190 920 195 980 220 990 215 1150 165 1215 140 1235 130 1130 150 1060 120 1095 100 1060 125 1000 105 910 85 1030 110 1130 100 1160 112 1195 95 1250 130 1240 130 1265 105 1290 80 1305 50 1330 47 1367 28 1367 25 1300 40 1275 75 1180 265 1070 290 990 285 920 310 830 320 755 290 790 290 890 268 895 285 740 300 600 330 640 385 570 470 500 470 570 410 700 385 800 415 790 400 850 370 860 355 930 415 950 420 1000 395 1080 375 1077 385 1030 380 990 350 990 360 1020 350 1043 335 990 310 1010 305 1152 370 1130 450 1022 435 980 440 790 415 755 430 680 475 610 500 670 510 800 470 900 500 900 490 930 510 1030 530 970 540 910 585 830 580 760 600 650 640 520 655 430 690 390 720 420 690 440 705 470 665 480 700 540 740 540 740 600 710 670 745 635 750 660 780 610 815 610 780 720 800 730 840 650 900 530 890 480 925 510 950 470 975 480 915 560 930 600 895 590 885 650 845 720 865 805 940 740 955 690 950 650 965 600 985 605 1000 580 1045 560 1062 515 1045 480 1075 480 1120 460 1115 400 1145 385 1150 345 1115 340 1080 370 1080 270 1110 230 1120 90 1140 120 1145 50Z"/></g>
  </g>

  <!-- peninsulas and islands -->
  <g class="land">
    <g transform="translate(840 474) scale(.5357 .389)"><path d="M1510 640 1570 630 1570 760 1535 720 1525 700ZM1535 860 1570 870 1570 1060 1530 1070 1505 1135 1478 1100 1500 1050 1480 1040 1530 950ZM1450 870 1490 880 1430 930 1420 900ZM1385 920 1408 930 1398 980 1380 950ZM1395 1095 1415 1115 1410 1170 1385 1210 1370 1300 1380 1310 1350 1500 1325 1520 1338 1450 1310 1360 1360 1270 1350 1150 1390 1140ZM1480 1170 1540 1180 1560 1230 1520 1310 1470 1300ZM1300 1395 1310 1440 1285 1500 1278 1480ZM1470 1490 1480 1520 1465 1508ZM1520 1505 1530 1530 1512 1535Z"/></g>
    <g transform="translate(1680 474) scale(.5357 .389)"><path d="M555 990 590 960 610 970 630 942 660 950 700 970 745 1080 795 1115 805 1170 803 1300 760 1345 690 1362 650 1360 640 1290 630 1165 610 1155 600 1180 625 1210 620 1330 640 1420 640 1500 600 1540 582 1520 580 1460 545 1450 500 1410 495 1370 458 1310 495 1260 500 1200 520 1160 505 1130 580 1080ZM400 870 415 930 400 950 420 1000 405 1120 386 1090 405 1000 390 920ZM465 1130 482 1190 450 1200 440 1255 425 1190ZM350 1110 370 1180 387 1290 365 1297 318 1230ZM122 1390 205 1490 180 1550 100 1568 10 1550 50 1535 85 1480ZM22 1310 90 1370 95 1400 70 1430 50 1370 22 1350ZM1065 920 1118 1060 1095 1100 1060 1060 1040 1040 1055 980ZM1250 920 1272 1000 1245 990 1242 930ZM870 1050 887 1090 870 1110 858 1095ZM1325 760 1352 790 1340 832ZM865 800 905 840 865 840ZM375 1385 400 1420 380 1400ZM695 1395 715 1400 705 1408ZM725 1440 758 1430 735 1455ZM0 1410 25 1430 0 1432ZM1195 860 1200 940 1190 1000 1180 900Z"/></g>
    <g transform="translate(2500 474) scale(.537 .389)"><path d="M1215 0 1265 0 1275 45 1300 30 1308 70 1270 70 1282 165 1306 220 1303 295 1258 292 1275 365 1215 357 1195 388 1160 378 1145 440 1105 485 1105 510 1080 522 1062 495 1065 470 1088 440 1097 330 1115 270 1130 185 1165 110 1185 45ZM1318 305 1312 368 1298 373 1290 335ZM1370 398 1367 468 1345 473 1325 455 1348 402ZM1195 428 1195 465 1165 485ZM180 543 215 550 215 525 240 575 215 565 195 610 183 600ZM215 622 247 625 233 638ZM148 752 190 750 216 780 215 810 190 785 172 800 168 765ZM175 808 197 810 192 843 173 828ZM75 730 88 740 90 770 110 780 140 855 130 900 100 880 90 790 73 780ZM10 640 27 618 22 690 8 685ZM540 490 552 475 548 505Z"/></g>
    <g transform="translate(1500 1000) scale(.5357 .3903)"><path d="M455 35 480 80 525 92 543 138 515 200 485 210 550 207 515 225 522 245 480 225 485 255 475 280 500 295 495 275 530 270 537 300 520 328 498 320 500 350 450 383 418 368 405 335 387 333 390 280 400 210 370 190 418 165 420 125ZM525 30 530 0 660 0 668 80 625 72 655 115 663 172 628 155 632 125 590 100 570 55ZM375 0 415 0 432 25 415 55 380 20ZM55 45 80 60 70 115 50 100ZM80 0 140 0 115 130 92 165 105 90 102 35ZM215 290 242 287 252 385 205 395 188 392 187 445 148 435 170 395 90 447 88 430 110 385ZM135 455 175 460 200 515 225 550 275 580 288 548 303 550 302 612 265 665 267 685 248 698 190 665 170 640 162 600 180 620 180 575 165 585 160 550 137 558 120 525 122 480ZM212 455 220 470 250 458 265 475 255 530 268 545 220 548ZM180 665 197 690 185 708 170 685ZM565 230 595 235 605 270 570 283ZM305 210 320 203 307 240 297 220ZM285 150 300 182 280 178ZM245 138 245 165 233 155ZM335 62 370 75 340 82ZM812 290 845 330 860 372 832 428 790 428 775 380 770 425 755 415 760 350 780 330 805 325ZM740 300 768 310 760 355 730 370 722 390 697 375 712 332 730 355 742 340ZM780 430 790 452 770 448ZM682 452 707 470 690 523 673 510ZM903 443 933 495 920 510 892 500 885 523 872 475ZM523 545 554 560 554 668 530 735 500 740 483 768 472 740 490 670 480 655 483 610 510 585ZM457 590 470 577 510 577 490 595ZM475 490 495 492 502 517 485 513ZM718 215 733 232 720 240ZM985 0 1080 0 1000 12ZM1030 48 1050 42 1048 55ZM1060 78 1098 85 1070 105ZM905 300 925 300 918 328ZM150 1120 162 1150 140 1193 125 1190ZM150 1235 155 1265 140 1268ZM710 30 737 75 720 58Z"/></g>
    <g transform="translate(840 1080) scale(.5357 .3903)"><path d="M792 915 790 958 773 950ZM1045 875 1055 900 1045 930ZM797 1185 803 1200 785 1232 771 1208ZM630 738 625 780 612 820 610 750ZM750 680 745 730 717 732ZM685 570 690 640 675 658 668 610ZM848 770 850 795 835 790ZM1015 580 1032 600 1020 615ZM630 650 635 665 625 685ZM640 500 675 550 650 620 635 640ZM0 900 60 890 95 930 85 1030 110 1130 100 1160 112 1195 95 1250 60 1290 28 1300 35 1250 0 1140Z"/></g>
    <g transform="translate(0 1080) scale(.5357 .3903)"><path d="M1185 1185 1198 1190 1192 1245 1170 1240ZM1210 1262 1250 1255 1215 1335 1198 1310ZM1250 1365 1260 1390 1246 1388ZM1115 1465 1140 1470 1128 1510 1105 1508ZM1370 1045 1390 1060 1375 1085ZM645 980 665 1040 655 1075 640 1040ZM1510 1060 1540 1050 1535 1130 1508 1120ZM1145 1145 1180 1150 1110 1230Z"/></g>
  </g>
  <g class="park">
    <g transform="translate(1680 474) scale(.5357 .389)"><path d="M690 1010 745 1085 730 1112 678 1110 680 1060ZM630 1110 650 1125 680 1118 730 1125 770 1112 805 1160 803 1300 770 1300 700 1312 640 1300 645 1200 625 1160ZM507 1247 548 1260 570 1330 600 1240 622 1260 620 1320 575 1380 585 1430 540 1400 512 1370ZM760 1300 780 1300 775 1330 755 1335ZM965 1138 1000 1180 995 1205 963 1200ZM600 1460 635 1480 600 1540 588 1530Z"/></g>
    <g transform="translate(840 474) scale(.5357 .389)"><path d="M1525 1140 1535 1180 1530 1228 1500 1210 1495 1180Z"/></g>
    <g transform="translate(2500 474) scale(.537 .389)"><path d="M485 485 507 488 514 458 547 505 497 523Z"/><path class="deep" d="M122 745 110 810 140 860 133 915 103 888 95 800 102 760Z"/></g>
    <g transform="translate(1500 1000) scale(.5357 .3903)"><path d="M515 608 520 655 540 685 520 738 495 740 483 768 472 735 495 665 498 635Z"/></g>
  </g>
  <g class="water">
    <g transform="translate(1680 474) scale(.5357 .389)"><path d="M708 1125 720 1125 712 1180 705 1175ZM525 225 540 265 522 260ZM935 880 965 930 955 945ZM1095 855 1110 760 1105 830Z"/></g>
  </g>

  <g class="rivers">
    <path transform="translate(840 474) scale(.5357 .389)" d="M0 80 50 120 110 205M245 40 320 150 340 280 405 450M330 690 280 760 250 920 205 1060 210 1110M135 1430 160 1568M1460 120 1450 250M1190 1000 1200 1010"/>
    <path transform="translate(0 1080) scale(.5357 .3903)" d="M1080 330 1110 420 1160 560M660 0 670 20M480 1250 462 1370M1510 600 1540 520 1560 540"/>
    <path transform="translate(840 1080) scale(.5357 .3903)" d="M160 0 150 240 90 480 100 680M290 610 230 850M440 640 430 900"/>
  </g>

  <use class="minor" href="#minor"/>
  <g class="byway">
    <path transform="translate(0 474) scale(.5357 .389)" d="M1205 0 1208 60 1175 180 1168 340M1390 420 1420 470 1485 520 1525 600 1545 710 1568 760"/>
    <path transform="translate(840 474) scale(.5357 .389)" d="M0 750 55 875 55 970 68 1020 100 1080 108 1180"/>
    <path transform="translate(0 1080) scale(.5357 .3903)" d="M0 1138 42 1150 145 1098 270 1105 330 1170 415 1235 445 1280 472 1293 505 1285 560 1298 612 1290 730 1440 780 1430"/>
  </g>
  <use class="route-edge" href="#routes"/>
  <use class="route-core" href="#routes"/>
  <use class="highway-edge" href="#highways"/>
  <use class="highway-core" href="#highways"/>
  <path class="ferry" d="M3016 575 3070 517 3077 488 3087 474"/>
  <path class="border" d="M0 1435 3 1540 5 1600 8 1692"/>

  <g class="shields">
    <use href="#us-shield" x="-30" y="902"/>
    <use href="#us-shield" x="494" y="697"/><text x="494" y="711">2</text>
    <use href="#us-shield-wide" x="695" y="1054"/><text x="695" y="1070">202</text>
    <use href="#us-shield-wide" x="1456" y="565"/><text x="1456" y="579">202</text>
    <use href="#us-shield" x="1838" y="639"/><text x="1838" y="654">1A</text>
    <use href="#us-shield" x="2107" y="762"/><text x="2107" y="776">1</text>
    <use href="#us-shield-wide" x="376" y="1404"/><text x="376" y="1419">302</text>
    <use href="#us-shield" x="1221" y="1197"/><text x="1221" y="1213">1</text>
  </g>
  <g class="interstates">
    <g transform="translate(1164 545)"><path class="crest" d="M-29-34Q-22-26-15-28-7-29 0-34 7-29 15-28 22-26 29-34L32-22H-32Z"/><path class="band" d="M-33-21H33V-15H-33Z"/><path class="field" d="M-33-17H33V-4Q33 22 0 33-33 22-33-4Z"/><text y="15">95</text></g>
    <g transform="translate(744 1175)"><path class="crest" d="M-29-34Q-22-26-15-28-7-29 0-34 7-29 15-28 22-26 29-34L32-22H-32Z"/><path class="band" d="M-33-21H33V-15H-33Z"/><path class="field" d="M-33-17H33V-4Q33 22 0 33-33 22-33-4Z"/><text y="15">95</text></g>
    <g transform="translate(504 1481)"><path class="crest" d="M-29-34Q-22-26-15-28-7-29 0-34 7-29 15-28 22-26 29-34L32-22H-32Z"/><path class="band" d="M-33-21H33V-15H-33Z"/><path class="field" d="M-33-17H33V-4Q33 22 0 33-33 22-33-4Z"/><text y="15">95</text></g>
    <g transform="translate(823 1258)"><path class="crest" d="M-44-34Q-33-26-22-28-9-29 0-34 9-29 22-28 33-26 44-34L46-22H-46Z"/><path class="band" d="M-48-21H48V-15H-48Z"/><path class="field" d="M-48-17H48V-4Q46 22 0 33-46 22-48-4Z"/><text y="15">295</text></g>
  </g>

  <g class="towns">
    <circle cx="631" cy="600" r="7"/><circle cx="328" cy="724" r="7"/><circle cx="151" cy="792" r="7"/><circle cx="148" cy="881" r="7"/><circle cx="955" cy="500" r="7"/><circle cx="1021" cy="726" r="7"/><circle cx="910" cy="981" r="7"/><circle cx="1493" cy="858" r="7"/><circle cx="1450" cy="1087" r="7"/><circle cx="1414" cy="1198" r="7"/><circle cx="582" cy="1202" r="7"/><circle cx="769" cy="1396" r="7"/><circle cx="1933" cy="734" r="7"/><circle cx="2097" cy="900" r="7"/><circle cx="2010" cy="953" r="7"/><circle cx="2006" cy="1014" r="7"/><circle cx="2573" cy="608" r="7"/><circle cx="2655" cy="552" r="7"/><circle cx="2850" cy="614" r="7"/><circle class="capital" cx="551" cy="1663" r="9"/>
  </g>
  <g class="labels">
    <text x="628" y="580">Farmington</text>
    <text x="327" y="704">Rumford</text>
    <text x="150" y="773">Newry</text>
    <text x="147" y="861">Bethel</text>
    <text x="953" y="481">Skowhegan</text>
    <text class="large" x="1022" y="706">Waterville</text>
    <text class="large" x="910" y="960">Augusta</text>
    <text x="1492" y="839">Belfast</text>
    <text x="1449" y="1066">Camden</text>
    <text x="1414" y="1178">Rockland</text>
    <text class="large" x="581" y="1182">Lewiston</text>
    <text class="large" x="769" y="1377">Brunswick</text>
    <text class="city" x="551" y="1640">Portland</text>
    <text x="1933" y="715">Ellsworth</text>
    <text x="2094" y="880">Bar Harbor</text>
    <text x="2121" y="969">Mt Desert</text>
    <text x="2005" y="1062">Southwest</text>
    <text x="2005" y="1114">Harbor</text>
    <text x="2451" y="624">Jonesboro</text>
    <text x="2654" y="533">Machias</text>
    <text x="2850" y="595">Cutler</text>
  </g>
  <g class="stations">
    <circle cx="1014" cy="1009" r="15"/><circle cx="1364" cy="860" r="15"/><circle cx="1302" cy="1039" r="15"/><circle cx="1221" cy="1083" r="15"/><circle cx="1706" cy="860" r="15"/><circle cx="1972" cy="1009" r="15"/><circle cx="814" cy="1472" r="15"/><circle cx="931" cy="1364" r="15"/><circle cx="955" cy="1502" r="15"/><circle cx="1014" cy="1450" r="15"/><circle cx="1144" cy="1420" r="15"/><circle cx="1302" cy="1345" r="15"/><circle cx="1364" cy="1252" r="15"/><circle cx="1044" cy="1252" r="15"/><circle cx="1114" cy="1147" r="15"/>
  </g>
</svg>

<form class="filters">
  <div class="picker">
    <select aria-label="Station"><option></option></select>
    <span class="picker-arrow"><svg viewBox="0 0 70 40" aria-hidden="true"><path d="M3 4 35 34 67 4"/></svg></span>
  </div>
  <div class="picker">
    <select aria-label="Measure"><option></option></select>
    <span class="picker-arrow"><svg viewBox="0 0 70 40" aria-hidden="true"><path d="M3 4 35 34 67 4"/></svg></span>
  </div>
  <div class="picker">
    <select aria-label="Period"><option></option></select>
    <span class="picker-arrow"><svg viewBox="0 0 70 40" aria-hidden="true"><path d="M3 4 35 34 67 4"/></svg></span>
  </div>
</form>

<section class="plots" id="plots" aria-label="Plots">
  <figure class="plot">
    <svg viewBox="0 1 929 580" role="img" aria-label="Line plot of two series">
      <path class="series-a" d="M47 507Q200 392 241 362C250 372 320 418 375 452L469 302 654 330 771 425 883 213"/>
      <path class="series-b" d="M47 302 230 457 320 351Q440 250 465 234C475 243 540 256 604 268L669 457 834 385 882 325"/>
    </svg>
  </figure>
  <figure class="plot">
    <svg viewBox="0 1 929 580" role="img" aria-label="Line plot of two series">
      <path class="series-a" d="M55 369 173 457 298 279 485 185 515 319 604 390 752 341 864 213"/>
      <path class="series-b" d="M55 147 209 257 298 213C349 261 386 300 387 323 388 350 436 410 485 457L782 457 864 507"/>
    </svg>
  </figure>
  <figure class="plot">
    <svg viewBox="0 1 929 580" role="img" aria-label="Line plot of two series">
      <path class="series-a" d="M38 380C90 392 175 415 185 425 200 425 260 408 311 397Q400 439 422 457 440 441 572 352L733 352 855 396"/>
      <path class="series-b" d="M38 507 239 185 360 213 507 147 727 213 854 80"/>
    </svg>
  </figure>
</section>
</main>
</body>
</html>
```

FILE: styles.css
```css
:root {
  --blue: #4990e2;
  --green: #267f00;
}

* {
  box-sizing: border-box;
}

body {
  margin: 0;
  background: #fff;
  font-family: Lato, "Liberation Sans", sans-serif;
}

/* header */
.site-header {
  display: flex;
  justify-content: space-between;
  align-items: baseline;
  padding: 181px 220px 94px 192px;
  background: var(--blue);
  color: #fff;
}

.site-title {
  margin: 0;
  font-family: Roboto, "Liberation Sans", sans-serif;
  font-size: 170px;
  font-weight: 400;
  line-height: 200px;
}

.site-nav {
  display: flex;
  gap: 108px;
  font-size: 75px;
  font-weight: 500;
  line-height: 100px;
}

.site-nav a {
  color: inherit;
  text-decoration: none;
}

/* map */
.map {
  display: block;
  width: 100%;
  height: auto;
  font-family: Roboto, "Liberation Sans", sans-serif;
  text-anchor: middle;
}

.map path {
  vector-effect: non-scaling-stroke;
}

.land { fill: #f5f5f5; }
.urban { fill: #e9e9e9; }
.park { fill: #cbedbf; }
.park .deep { fill: #b7e7a5; }
.water { fill: #aadaff; }

.rivers,
.minor,
.byway,
.route-edge,
.route-core,
.highway-edge,
.highway-core,
.ferry,
.border {
  fill: none;
  stroke-linejoin: round;
}

.rivers { stroke: #aadaff; stroke-width: 4px; }
.minor { stroke: #fff; stroke-width: 3px; }
.byway { stroke: #f6d98a; stroke-width: 5px; }
.route-edge { stroke: #f3cd66; stroke-width: 10px; }
.route-core { stroke: #ffe494; stroke-width: 4px; }
.highway-edge { stroke: #f5cf68; stroke-width: 15px; }
.highway-core { stroke: #ffe69b; stroke-width: 10px; }
.ferry { stroke: #7d8083; stroke-width: 4px; }
.border { stroke: #8f8f8f; stroke-width: 3px; stroke-dasharray: 9px 6px; }

.shields {
  fill: #fff;
  stroke: #616467;
  stroke-width: 4px;
  font-size: 38px;
}

.shields text {
  fill: #3c4043;
  stroke: none;
}

.interstates {
  fill: #fff;
  font-size: 36px;
  font-weight: 700;
}

.crest { fill: #d86161; }
.band { fill: #fff; }
.field { fill: #3a78c9; }

.towns {
  fill: #eee;
  stroke: #616467;
  stroke-width: 4px;
}

.towns .capital {
  stroke: #44474a;
}

.labels {
  fill: #616467;
  stroke: #f5f5f5cc;
  stroke-width: 7px;
  stroke-linejoin: round;
  paint-order: stroke;
  font-size: 45px;
}

.labels .large { font-size: 49px; }

.labels .city {
  fill: #44474a;
  font-size: 53px;
}

.stations { fill: var(--blue); }

/* drop-downs */
.filters {
  display: flex;
  justify-content: center;
  gap: 178px;
  padding: 106px 188px 0;
}

.picker {
  display: grid;
  grid-template-columns: minmax(0, 1fr) 122px;
  flex: 0 1 571px;
  height: 131px;
  border: 8px solid var(--blue);
}

.picker select {
  grid-area: 1 / 1 / 2 / 3;
  border: 0;
  border-radius: 0;
  padding: 0 146px 0 24px;
  background: transparent;
  appearance: none;
  font: 48px Lato, "Liberation Sans", sans-serif;
}

.picker-arrow {
  grid-area: 1 / 2 / 2 / 3;
  display: flex;
  align-items: center;
  justify-content: center;
  border-left: 8px solid var(--blue);
  padding-top: 4px;
  pointer-events: none;
}

.picker-arrow svg {
  width: 70px;
}

.picker-arrow path {
  fill: none;
  stroke: var(--blue);
  stroke-width: 8px;
}

/* plots */
.plots {
  display: grid;
  grid-template-columns: 1fr 65px 1fr 76px 1fr;
  padding: 143px 178px 0 188px;
}

.plot {
  margin: 0;
  border: 8px solid var(--blue);
}

.plot:nth-child(2) { grid-column: 3; }
.plot:nth-child(3) { grid-column: 5; }

.plot svg {
  display: block;
  width: 100%;
}

.plot path {
  fill: none;
  stroke-width: 8px;
}

.series-a { stroke: var(--blue); }
.series-b { stroke: var(--green); }
```
